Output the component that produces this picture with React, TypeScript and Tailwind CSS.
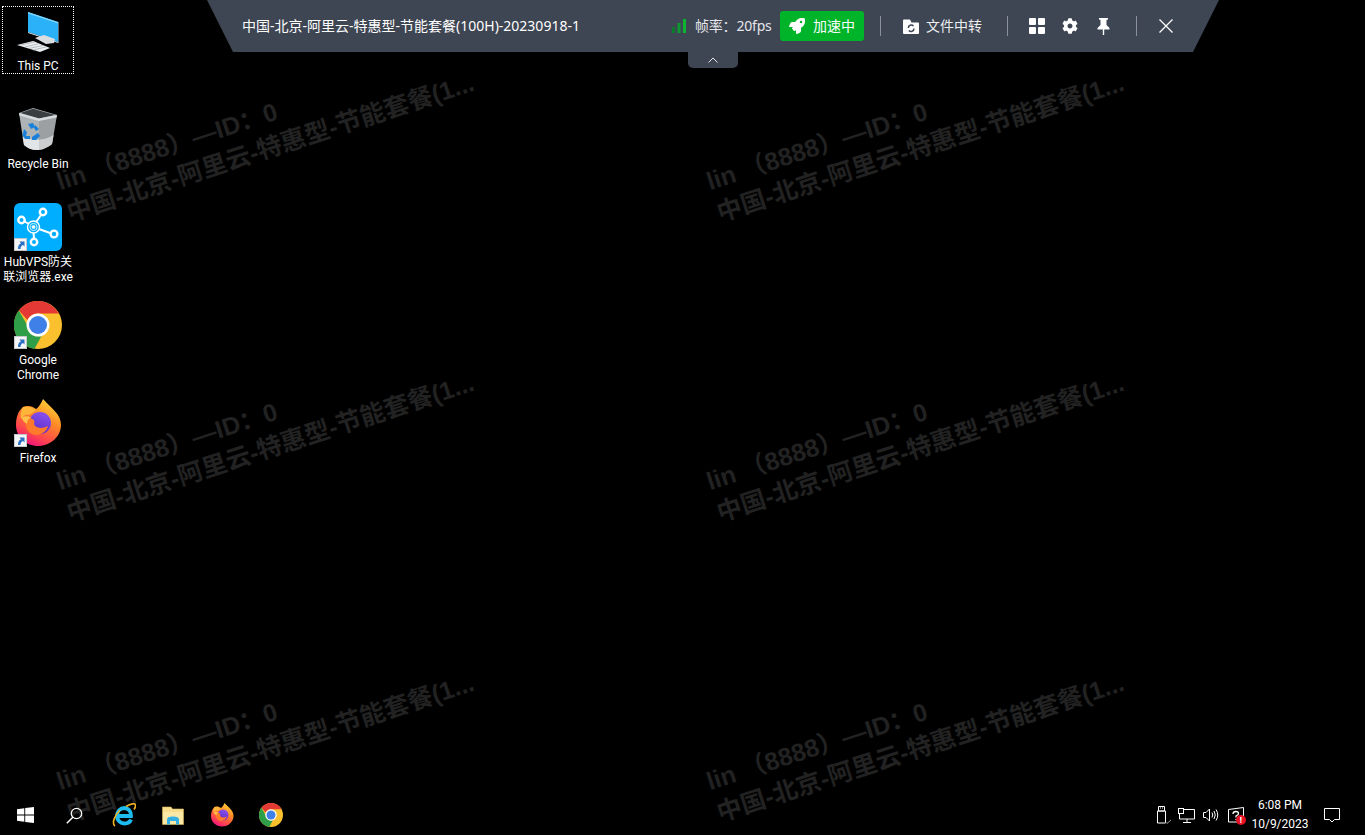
import React from 'react'
import { FaRocket, FaCog } from 'react-icons/fa'

const Shortcut = () => (
  <div className="absolute bottom-0 left-0 h-[13px] w-[13px]">
    <svg viewBox="0 0 13 13" className="h-[13px] w-[13px]">
      <rect width="13" height="13" fill="#c4c8cc" />
      <rect x="1" y="1" width="11" height="11" fill="#f4f5f6" />
      <path d="M4 11 C4 7.5 5 6 7 5.5 L5.5 3.5 L10.5 3.5 L10.5 8.5 L9 7 C7.5 7.5 6.5 9 6.5 11 Z" fill="#2a6fc4" />
    </svg>
  </div>
)

const PcIcon = () => (
  <svg viewBox="0 0 48 48" className="h-12 w-12">
    <path d="M14 5 L44 15 L44 35 L14 25 Z" fill="#2ab1f7" />
    <path d="M14 5 L44 15 L44 16.5 L14 6.5 Z" fill="#80d5fb" />
    <path d="M14 25 L44 35 L44 36 L14 26 Z" fill="#d5dde2" />
    <path d="M44 15 L45 15 L45 36 L44 36 Z" fill="#56626e" />
    <path d="M21 31 L30 28 L41 32 L40 36 L32 37 Z" fill="#d9dde0" />
    <path d="M3 38 L19 34 L36 41 L26 45 Z" fill="#eceff1" />
    <path d="M7 38 L21 34.8 M11 40 L25 36.6 M15 41.5 L29 38.4 M19 43 L32 40" stroke="#a6adb3" strokeWidth="0.8" />
  </svg>
)

const BinIcon = () => (
  <svg viewBox="0 0 48 48" className="h-12 w-12">
    <path d="M5 8 L19 3 L43 10 L38 39 C32 44 26 45 23 45 C18 45 13 43 10 40 Z" fill="#aeb3b6" />
    <path d="M6.5 8 L19 3.8 L41 10 L25 13.5 Z" fill="#3a3e41" />
    <path d="M5 8 L25 13.5 L43 10 L42.6 12.5 L25 16 L5.4 10.5 Z" fill="#d8dbdd" />
    <path d="M8.6 32 C16 36 30 36 39.6 30 L38 39 C32 44 26 45 23 45 C18 45 13 43 10 40 Z" fill="#e2e5e7" />
    <path d="M25 16 L42.6 12.5 L38 39 C34 43 30 44.5 25 45 Z" fill="#000" opacity="0.1" />
    <path d="M14 19 L19 18 L21 22 L17 24 Z M21 20 L25 24 L22 26 L20 23 Z M10 24 L13 27 L12 31 L16 31 L16 34 L11 34 L8.5 30 Z M24 28 L26 31 L22 35 L18 35 L18 32 Z" fill="#1a80dc" />
  </svg>
)

const HubIcon = () => (
  <svg viewBox="0 0 48 48" className="h-12 w-12">
    <rect width="48" height="48" rx="6" fill="#00aeff" />
    <g stroke="#fff" strokeWidth="2" fill="none">
      <path d="M15 21 L10.5 18.5 M22.5 18.5 L27 12 M25 26 L36 30 M19.5 30 L20 35" />
      <circle cx="7.5" cy="17" r="3.2" fill="#00aeff" strokeWidth="2.4" />
      <circle cx="29" cy="9" r="3.2" fill="#00aeff" strokeWidth="2.4" />
      <circle cx="40" cy="31" r="3.4" fill="#00aeff" strokeWidth="2.4" />
      <circle cx="20" cy="39" r="3.2" fill="#00aeff" strokeWidth="2.4" />
      <circle cx="19.5" cy="24" r="6" fill="#00aeff" strokeWidth="1.4" />
      <circle cx="19.5" cy="24" r="3.6" strokeWidth="0.8" />
      <circle cx="19.5" cy="24" r="1.6" fill="#fff" strokeWidth="0.6" />
    </g>
  </svg>
)

const ChromeIcon = ({ size }: { size: string }) => (
  <svg viewBox="0 0 48 48" className={size}>
    <circle cx="24" cy="24" r="24" fill="#fbc02d" />
    <path d="M24 0 A24 24 0 0 1 45 12.5 L24 12.5 A11.5 11.5 0 0 0 13.5 19 L4.8 9.5 A24 24 0 0 1 24 0 Z" fill="#e53935" />
    <path d="M4.8 9.5 L14 25.5 A11.5 11.5 0 0 0 27.5 35 L20.5 47.8 A24 24 0 0 1 4.8 9.5 Z" fill="#2e9e48" />
    <circle cx="24" cy="24" r="11.5" fill="#fff" />
    <circle cx="24" cy="24" r="9" fill="#3f7fe8" />
  </svg>
)

const FirefoxIcon = ({ className }: { className: string }) => (
  <svg viewBox="0 0 48 48" className={className}>
    <defs>
      <linearGradient id="ffBody" x1="0.85" y1="0.05" x2="0.35" y2="1">
        <stop offset="0" stopColor="#ffd83a" />
        <stop offset="0.4" stopColor="#ff8a26" />
        <stop offset="0.75" stopColor="#ff4a4a" />
        <stop offset="1" stopColor="#f0157a" />
      </linearGradient>
      <linearGradient id="ffGlobe" x1="0.7" y1="0" x2="0.3" y2="1">
        <stop offset="0" stopColor="#8a52f0" />
        <stop offset="1" stopColor="#5a2cc4" />
      </linearGradient>
    </defs>
    <path d="M29 0 C27 5 24 9 22 10 C18 7 14 6 9 8 C4 12 2 19 2 26 C2 38 12 47 24 47 C37 47 47 37 47 26 C47 15 38 10 29 0 Z" fill="url(#ffBody)" />
    <path d="M9 8 C13 7 18 8 22 11 C19 13 17 15 15 16 C12 15 9 17 7 20 C6 16 7 11 9 8 Z" fill="#ffb53a" />
    <circle cx="26" cy="24" r="11" fill="url(#ffGlobe)" />
    <path d="M13 18 C17 19 22 21 20 24 C20 28 26 31 34 27 C32 35 21 39 15 33 C11 29 11 23 13 18 Z" fill="#ff7a2a" />
    <path d="M8 18 C11 17 14 17 17 18.5 C14 20 13 22 13 25 C10 23 8 21 8 18 Z" fill="#ffc24a" />
  </svg>
)

const IeIcon = () => (
  <svg viewBox="0 0 24 24" className="h-6 w-6">
    <path d="M5.5 13 L19 13 C19.5 8.5 16 5 12.5 5 C8 5 5 8.5 5 13 C5 17.5 8.5 20.5 12.5 20.5 C15.5 20.5 18 19 19 16.5" fill="none" stroke="#1ebbee" strokeWidth="3.8" />
    <path d="M3 23 C-0.5 20.5 2.5 12.5 8 7 M14 3.5 C19 0.5 23 0 23.5 2 C23.8 3.5 23 5 22 6.5" fill="none" stroke="#f0b323" strokeWidth="1.6" />
  </svg>
)

const FolderIcon = () => (
  <svg viewBox="0 0 22 19" className="h-[19px] w-[22px]">
    <path d="M0.5 1 L9 1 L10.5 3 L21.5 3 L21.5 18.5 L0.5 18.5 Z" fill="#f7dd8d" stroke="#d8b75a" strokeWidth="0.6" />
    <path d="M1 6 L21 6 L21 18 L1 18 Z" fill="#fbe8a6" />
    <path d="M5 18.5 L5 13.5 C5 11.5 7 10.5 11 10.5 C15 10.5 17 11.5 17 13.5 L17 18.5 L14 18.5 L14 15 L8 15 L8 18.5 Z" fill="#35b0e6" />
  </svg>
)

const WatermarkBlock = () => (
  <div className="flex items-center justify-center">
    <div className="rotate-[-18deg] whitespace-pre text-[25px] leading-[33px] font-bold text-[#222222] font-['Liberation_Sans','Noto_Sans_CJK_SC',sans-serif]">
      <div>lin （8888）—ID：0</div>
      <div>中国-北京-阿里云-特惠型-节能套餐(1...</div>
    </div>
  </div>
)

const DesktopItem = ({
  label,
  icon,
  selected,
  shortcut,
}: {
  label: string[]
  icon: React.ReactNode
  selected?: boolean
  shortcut?: boolean
}) => (
  <div className="h-[98px] w-[72px]">
    <div className={`flex flex-col items-center border border-dotted pb-0 ${selected ? 'h-[68px] border-white' : 'border-transparent'}`}>
      <div className="relative h-12 w-12">
        {icon}
        {shortcut && <Shortcut />}
      </div>
      <div className="mt-[4px] text-center text-[12px] leading-[15px] whitespace-nowrap text-white font-['Roboto','Noto_Sans_CJK_SC',sans-serif]">
        {label.map((line) => (
          <div key={line}>{line}</div>
        ))}
      </div>
    </div>
  </div>
)

const Toolbar = () => (
  <div className="absolute top-0 left-[207px] z-20 flex w-[1012px] flex-col items-center">
    <div className="flex h-[52px] w-full items-center bg-[#3e4553] pl-[35px] text-[14px] text-white [clip-path:polygon(0_0,100%_0,986px_100%,26px_100%)]">
      <span className="mb-[2px] w-[430px]">中国-北京-阿里云-特惠型-节能套餐(100H)-20230918-1</span>
      <svg viewBox="0 0 14 14" className="h-[14px] w-[14px]">
        <rect x="0" y="8" width="3" height="6" fill="#0b7a2a" />
        <rect x="5.5" y="4" width="3" height="10" fill="#0b9a30" />
        <rect x="11" y="0" width="3" height="14" fill="#0cb52f" />
      </svg>
      <span className="mb-[2px] ml-[9px] w-[85px] tracking-[-0.2px] text-[#e4e6ea]">帧率：20fps</span>
      <div className="flex h-[30px] w-[84px] items-center justify-center gap-2 rounded-[3px] bg-[#00b42a]">
        <FaRocket className="h-4 w-4 text-white" />
        <span className="mb-[2px]">加速中</span>
      </div>
      <div className="ml-4 h-5 w-px bg-[#8b909a]" />
      <svg viewBox="0 0 16 15" className="ml-[22px] h-[15px] w-4">
        <path d="M0 1.5 Q0 0.5 1 0.5 L7 0.5 L8.5 3.5 L15 3.5 Q16 3.5 16 4.5 L16 14 Q16 15 15 15 L1 15 Q0 15 0 14 Z" fill="#fff" />
        <path d="M5.3 9 A3 3 0 0 1 10.5 7 M11 9.5 A3 3 0 0 1 5.8 11.5" fill="none" stroke="#3e4553" strokeWidth="1.5" />
      </svg>
      <span className="mb-[2px] ml-[7px] w-[81px] text-[#eceef1]">文件中转</span>
      <div className="h-5 w-px bg-[#8b909a]" />
      <div className="ml-[21px] grid h-4 w-4 grid-cols-2 gap-[2px]">
        <div className="rounded-[1px] bg-white" />
        <div className="rounded-[1px] bg-white" />
        <div className="rounded-[1px] bg-white" />
        <div className="rounded-[1px] bg-white" />
      </div>
      <FaCog className="ml-[17px] h-4 w-4 text-white" />
      <svg viewBox="0 0 15 17" className="ml-[18px] h-[17px] w-[15px]">
        <path d="M3 0 L12 0 L12 1.5 L10.5 2 L10.5 7 L13.5 10 L13.5 11.5 L8.2 11.5 L8.2 17 L6.8 17 L6.8 11.5 L1.5 11.5 L1.5 10 L4.5 7 L4.5 2 L3 1.5 Z" fill="#fff" />
      </svg>
      <div className="ml-[25px] h-5 w-px bg-[#8b909a]" />
      <svg viewBox="0 0 14 14" className="ml-[22px] h-[14px] w-[14px]">
        <path d="M0.5 0.5 L13.5 13.5 M13.5 0.5 L0.5 13.5" stroke="#fff" strokeWidth="1.3" />
      </svg>
    </div>
    <div className="flex h-4 w-[50px] items-center justify-center rounded-b-[5px] bg-[#3e4553]">
      <svg viewBox="0 0 10 6" className="h-[6px] w-[10px]">
        <path d="M0.5 5.5 L5 1 L9.5 5.5" fill="none" stroke="#e8e8e8" strokeWidth="1" />
      </svg>
    </div>
  </div>
)

const Taskbar = () => (
  <div className="relative z-10 flex h-10 items-center text-white">
    <div className="flex w-[50px] justify-center">
      <svg viewBox="0 0 17 16" className="h-4 w-[17px]">
        <path d="M0 2.3 L7.3 1.2 L7.3 7.6 L0 7.6 Z M8.2 1.1 L17 0 L17 7.6 L8.2 7.6 Z M0 8.4 L7.3 8.4 L7.3 14.8 L0 13.7 Z M8.2 8.4 L17 8.4 L17 16 L8.2 14.9 Z" fill="#fff" />
      </svg>
    </div>
    <div className="flex w-[48px] justify-center">
      <svg viewBox="0 0 17 17" className="h-[17px] w-[17px]">
        <circle cx="10.5" cy="6.5" r="5.2" fill="none" stroke="#fff" strokeWidth="1.2" />
        <path d="M6.8 10.2 L0.8 16.2" stroke="#fff" strokeWidth="1.4" />
      </svg>
    </div>
    <div className="ml-[1.5px] flex w-[49px] justify-center">
      <IeIcon />
    </div>
    <div className="flex w-[49px] justify-center">
      <FolderIcon />
    </div>
    <div className="flex w-[49px] justify-center">
      <FirefoxIcon className="h-6 w-6" />
    </div>
    <div className="flex w-[49px] justify-center">
      <ChromeIcon size="h-6 w-6" />
    </div>
    <div className="ml-auto flex items-center">
      <svg viewBox="0 0 16 18" className="h-[18px] w-4">
        <path d="M2.5 0.5 L8.5 0.5 L8.5 5 L2.5 5 Z M1.5 5 L9.5 5 L9.5 17 L1.5 17 Z M4 2 L5 2 M6 2 L7 2" fill="none" stroke="#fff" strokeWidth="1" />
        <path d="M9.5 16 L11 17.5 L15 14" fill="none" stroke="#9a9a9a" strokeWidth="1" />
      </svg>
      <svg viewBox="0 0 17 15" className="ml-[6px] h-[15px] w-[17px]">
        <path d="M1.5 1.5 L16.5 1.5 L16.5 11 L1.5 11 Z M9 11 L9 14 M5 14.5 L13 14.5" fill="none" stroke="#fff" strokeWidth="1" />
        <rect x="0.5" y="0.5" width="5" height="5" fill="#000" stroke="#fff" />
      </svg>
      <svg viewBox="0 0 16 14" className="ml-[8px] h-[14px] w-4">
        <path d="M0.5 4.5 L3 4.5 L6.5 1 L6.5 13 L3 9.5 L0.5 9.5 Z M9 4.5 Q10.5 7 9 9.5 M11 3 Q13.5 7 11 11 M13 1.5 Q16.5 7 13 12.5" fill="none" stroke="#fff" strokeWidth="1" />
      </svg>
      <div className="relative ml-[9px] h-[16px] w-[16px]">
        <svg viewBox="0 0 16 16" className="h-4 w-4">
          <path d="M0.5 2.5 L15.5 0.5 L15.5 15 L0.5 15 Z" fill="none" stroke="#fff" strokeWidth="1" />
          <path d="M5 7 Q5 4.5 8 4.5 Q10.5 4.5 10.5 6.5 Q10.5 8 8 9 L8 10.5 M8 12 L8 13" fill="none" stroke="#fff" strokeWidth="1.3" />
        </svg>
        <div className="absolute right-[-2px] bottom-[-2px] flex h-[10px] w-[10px] items-center justify-center rounded-full bg-[#e81123] text-[8px] leading-none font-bold text-white">!</div>
      </div>
      <div className="ml-[5px] w-[62px] text-center text-[12px] leading-[19px] font-['Roboto',sans-serif]">
        <div>6:08 PM</div>
        <div>10/9/2023</div>
      </div>
      <svg viewBox="0 0 16 15" className="mr-[25px] ml-[13px] h-[15px] w-4">
        <path d="M0.5 0.5 L15.5 0.5 L15.5 11.5 L10.5 11.5 L8 14 L5.5 11.5 L0.5 11.5 Z" fill="none" stroke="#fff" strokeWidth="1" />
      </svg>
    </div>
  </div>
)

export default function App() {
  return (
    <div className="relative flex h-[835px] w-[1365px] flex-col overflow-hidden bg-black font-['Noto_Sans','Noto_Sans_CJK_SC',sans-serif]">
      <div className="absolute top-[-18px] left-[-60px] grid grid-cols-[650px_650px] auto-rows-[300px]">
        <WatermarkBlock />
        <WatermarkBlock />
        <WatermarkBlock />
        <WatermarkBlock />
        <WatermarkBlock />
        <WatermarkBlock />
      </div>
      <Toolbar />
      <div className="relative flex flex-1 flex-col pt-[6px] pl-[2px]">
        <DesktopItem label={['This PC']} icon={<PcIcon />} selected />
        <DesktopItem label={['Recycle Bin']} icon={<BinIcon />} />
        <DesktopItem label={['HubVPS防关', '联浏览器.exe']} icon={<HubIcon />} shortcut />
        <DesktopItem label={['Google', 'Chrome']} icon={<ChromeIcon size="h-12 w-12" />} shortcut />
        <DesktopItem label={['Firefox']} icon={<FirefoxIcon className="h-12 w-12" />} shortcut />
      </div>
      <Taskbar />
    </div>
  )
}
